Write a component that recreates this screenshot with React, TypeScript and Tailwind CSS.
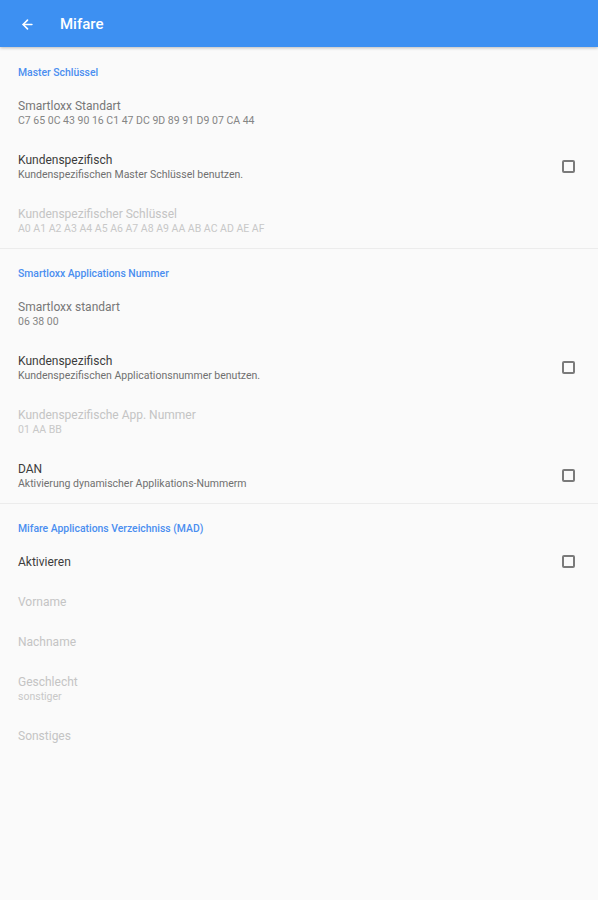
import { ArrowLeft } from "lucide-react";

type Pref = {
  title: string;
  summary?: string;
  checkbox?: boolean;
  disabled?: boolean;
  muted?: boolean;
};

type Section = { header: string; items: Pref[] };

const sections: Section[] = [
  {
    header: "Master Schlüssel",
    items: [
      { title: "Smartloxx Standart", summary: "C7 65 0C 43 90 16 C1 47 DC 9D 89 91 D9 07 CA 44", muted: true },
      { title: "Kundenspezifisch", summary: "Kundenspezifischen Master Schlüssel benutzen.", checkbox: true },
      {
        title: "Kundenspezifischer Schlüssel",
        summary: "A0 A1 A2 A3 A4 A5 A6 A7 A8 A9 AA AB AC AD AE AF",
        disabled: true,
      },
    ],
  },
  {
    header: "Smartloxx Applications Nummer",
    items: [
      { title: "Smartloxx standart", summary: "06 38 00", muted: true },
      { title: "Kundenspezifisch", summary: "Kundenspezifischen Applicationsnummer benutzen.", checkbox: true },
      { title: "Kundenspezifische App. Nummer", summary: "01 AA BB", disabled: true },
      { title: "DAN", summary: "Aktivierung dynamischer Applikations-Nummerm", checkbox: true },
    ],
  },
  {
    header: "Mifare Applications Verzeichniss (MAD)",
    items: [
      { title: "Aktivieren", checkbox: true },
      { title: "Vorname", disabled: true },
      { title: "Nachname", disabled: true },
      { title: "Geschlecht", summary: "sonstiger", disabled: true },
      { title: "Sonstiges", disabled: true },
    ],
  },
];

function Row({ p }: { p: Pref }) {
  const titleColor = p.disabled ? "text-[#c4c4c4]" : p.muted ? "text-[#777777]" : "text-[#3c3c3c]";
  const summaryColor = p.disabled ? "text-[#c8c8c8]" : p.muted ? "text-[#858585]" : "text-[#707070]";
  return (
    <div className={`flex items-center pl-[18px] pr-[23px] ${p.summary ? "h-[54px]" : "h-[40px]"}`}>
      <div className="flex-1 min-w-0">
        <div className={`text-[12px] leading-[16px] ${titleColor}`}>{p.title}</div>
        {p.summary && <div className={`text-[10.5px] leading-[14px] ${summaryColor}`}>{p.summary}</div>}
      </div>
      {p.checkbox && (
        <div className="w-[13px] h-[13px] border-2 border-[#7a7a7a] rounded-[2px] -mt-[1px]" />
      )}
    </div>
  );
}

export default function App() {
  return (
    <div className="min-h-[900px] bg-[#fafafa] font-['Roboto',sans-serif]">
      <div className="h-[47px] bg-[#3d90f2] flex items-center pt-[1px] shadow-[0_1px_3px_rgba(0,0,0,0.25)] relative z-10">
        <ArrowLeft className="ml-[20px] text-white" size={15} strokeWidth={2.6} />
        <span className="ml-[25px] text-white text-[15px] font-medium">Mifare</span>
      </div>
      <div className="pt-[1px]">
        {sections.map((s, i) => (
          <div key={s.header} className={i > 0 ? "border-t border-[#ececec]" : ""}>
            <div className="pl-[18px] pt-[18px] pb-[6px] h-[38px] text-[10.4px] leading-[14px] font-medium text-[#4a8ef0]">
              {s.header}
            </div>
            {s.items.map((p, j) => (
              <Row key={j} p={p} />
            ))}
          </div>
        ))}
      </div>
    </div>
  );
}
